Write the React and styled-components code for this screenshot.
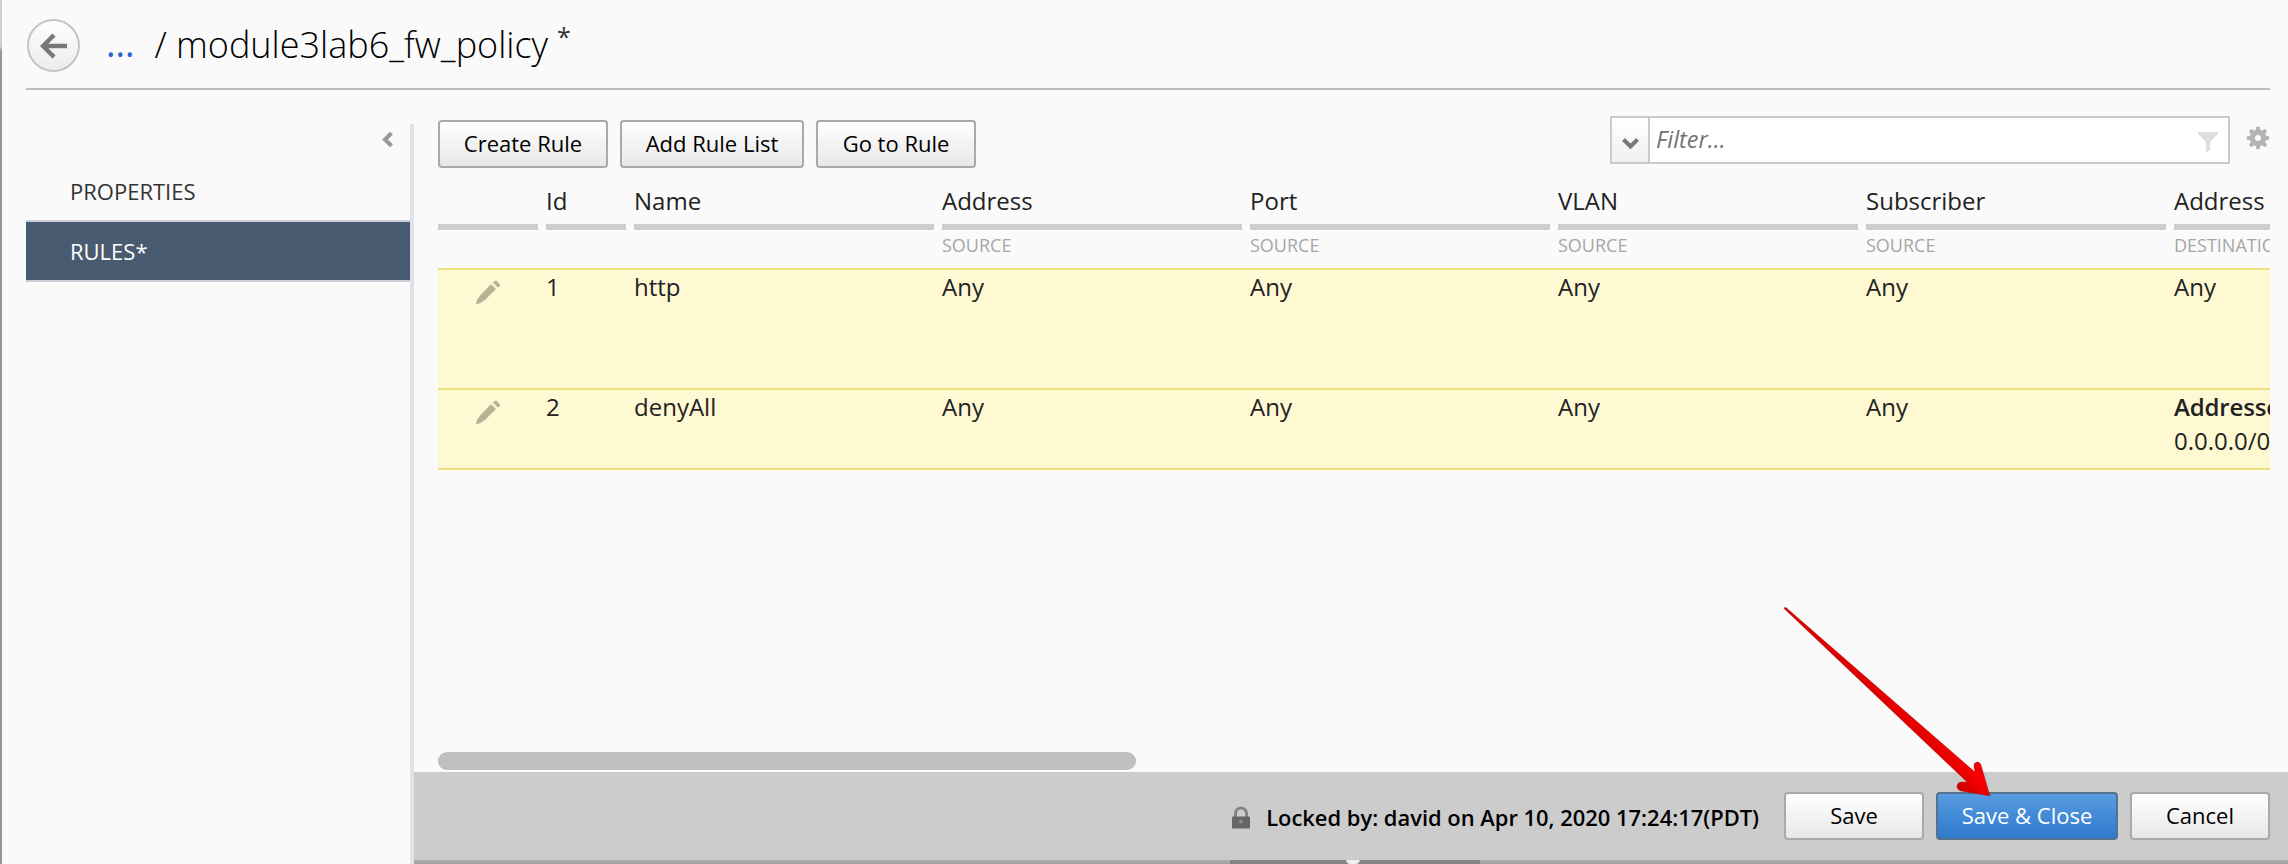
import React from "react";
import styled, { createGlobalStyle, css } from "styled-components";

const GlobalStyle = createGlobalStyle`
  * { box-sizing: border-box; }
  html, body { margin: 0; padding: 0; }
  body {
    background: #fafafa;
    font-family: "Open Sans", sans-serif;
    color: #222;
    overflow: hidden;
  }
`;

const Window = styled.div`
  position: relative;
  display: flex;
  flex-direction: column;
  width: 2288px;
  height: 864px;
  overflow: hidden;
  background: #fafafa;
`;

const WindowEdge = styled.div`
  position: absolute;
  left: 0;
  top: 0;
  width: 2px;
  height: 864px;
  background: linear-gradient(#cfcfcf 0, #cfcfcf 46px, #979797 52px, #979797 100%);
`;

const Header = styled.header`
  display: flex;
  flex: none;
  align-items: flex-start;
  height: 90px;
  margin: 0 18px 0 26px;
  border-bottom: 2px solid #bcbcbc;
`;

const BackButton = styled.button`
  display: flex;
  align-items: center;
  justify-content: center;
  flex: none;
  width: 53px;
  height: 53px;
  margin: 19px 0 0 1px;
  padding: 0;
  border: 2px solid #c4c4c4;
  border-radius: 50%;
  background: linear-gradient(#fefefe, #ececec);
`;

const Crumb = styled.a`
  margin: 18px 0 0 26px;
  font-size: 36px;
  line-height: 52px;
  color: #1f66d0;
`;

const Title = styled.h1`
  margin: 19px 0 0 20px;
  font-size: 36px;
  font-weight: 300;
  line-height: 52px;
  color: #000;
  white-space: pre;
`;

const Dirty = styled.span`
  margin: 16px 0 0 9px;
  font-size: 25px;
  line-height: 40px;
  color: #333;
`;

const Body = styled.div`
  display: flex;
  flex: 1;
  min-height: 0;
`;

const Sidebar = styled.nav`
  flex: none;
  width: 384px;
  margin-left: 26px;
  padding-top: 34px;
`;

const Collapse = styled.div`
  display: flex;
  justify-content: flex-end;
  height: 34px;
  padding: 8px 17px 0 0;
`;

const NavItem = styled.div`
  height: 62px;
  padding: 2px 0 0 44px;
  font-size: 22px;
  line-height: 58px;
  border-top: 2px solid transparent;
  border-bottom: 2px solid transparent;
  color: #333;
  ${(p) =>
    p.$active &&
    css`
      padding-top: 0;
      color: #fff;
      background: #495b70;
      border-color: #cbd0d8;
    `}
`;

const Divider = styled.div`
  flex: none;
  width: 4px;
  margin-top: 34px;
  background: #dfe3e9;
`;

const Main = styled.main`
  display: flex;
  flex-direction: column;
  flex: 1;
  min-width: 0;
`;

const Toolbar = styled.div`
  display: flex;
  flex: none;
  align-items: flex-start;
  height: 84px;
  padding: 30px 18px 0 24px;
`;

const Button = styled.button`
  flex: none;
  width: ${(p) => p.$width}px;
  height: 48px;
  margin: 0 12px 0 0;
  padding: 0 0 3px;
  border: 2px solid #a9a9a9;
  border-radius: 4px;
  background: linear-gradient(#fff, #e7e7e7);
  color: #000;
  font: 400 22px/40px "Open Sans", sans-serif;
  ${(p) =>
    p.$primary &&
    css`
      color: #fff;
      border-color: #55728f;
      background: linear-gradient(#579be2, #2f7acc);
    `}
`;

const FilterBox = styled.div`
  display: flex;
  align-items: center;
  width: 620px;
  height: 48px;
  margin: -4px 16px 0 auto;
  border: 2px solid #cacaca;
  background: #fff;
`;

const FilterToggle = styled.div`
  display: flex;
  align-items: center;
  justify-content: center;
  width: 38px;
  height: 44px;
  padding-top: 7px;
  border-right: 2px solid #cacaca;
  background: linear-gradient(#fff, #f0f0f0);
`;

const FilterText = styled.span`
  flex: 1;
  padding: 0 0 2px 6px;
  font-size: 23.5px;
  line-height: 40px;
  font-style: italic;
  color: #737373;
`;

const FunnelSlot = styled.span`
  display: flex;
  margin: 3px 10px 0 0;
`;

const GearSlot = styled.span`
  display: flex;
  margin-top: 6px;
`;

const Grid = styled.div`
  flex: none;
  margin: 0 18px 0 24px;
  overflow: hidden;
`;

const GridRow = styled.div`
  display: grid;
  grid-template-columns: 100px 80px repeat(6, 300px);
  column-gap: 8px;
  width: max-content;
`;

const ColumnHead = styled.div`
  height: 94px;
`;

const ColumnName = styled.div`
  height: 56px;
  padding-top: 8px;
  border-bottom: 6px solid #cecece;
  font-size: 24px;
  line-height: 37px;
`;

const ColumnGroup = styled.div`
  padding-top: 1px;
  font-size: 18px;
  line-height: 28px;
  color: #a6a6a6;
`;

const Record = styled(GridRow)`
  height: ${(p) => p.$height}px;
  border-top: 2px solid #eee07c;
  background: #fff9d3;
  border-bottom: ${(p) => (p.$last ? "2px solid #eee07c" : "none")};
`;

const Cell = styled.div`
  font-size: 24px;
  line-height: 34px;
`;

const EditCell = styled.div`
  display: flex;
  padding: 10px 0 0 37px;
`;

const Strong = styled.div`
  font-weight: 600;
  letter-spacing: -0.15px;
`;

const ScrollTrack = styled.div`
  height: 20px;
  margin: auto 18px 0 24px;
`;

const ScrollThumb = styled.div`
  width: 698px;
  height: 18px;
  border-radius: 9px;
  background: #bfbfbf;
`;

const Footer = styled.footer`
  display: flex;
  flex: none;
  align-items: flex-start;
  justify-content: flex-end;
  height: 88px;
  padding: 20px 6px 0 0;
  background: #ccc;
`;

const LockText = styled.span`
  margin: 3px 25px 0 16px;
  font-size: 21.92px;
  font-weight: 600;
  line-height: 46px;
  color: #000;
  white-space: nowrap;
`;

const LockSlot = styled.span`
  display: flex;
  margin-top: 14px;
`;

const BottomEdge = styled.div`
  display: flex;
  flex: none;
  height: 4px;
  padding-left: 816px;
  background: linear-gradient(#afafaf, #9f9f9f);
`;

const EdgeHandle = styled.div`
  display: flex;
  justify-content: center;
  width: 250px;
  height: 4px;
  padding-right: 4px;
  background: #848484;
`;

const Pointer = styled.svg`
  position: absolute;
  left: 1780px;
  top: 600px;
  pointer-events: none;
`;

const BackIcon = () => (
  <svg width="28" height="28" viewBox="0 0 28 28" fill="none" stroke="#777" strokeWidth="4.4">
    <path d="M27 14H4M14 3L3 14l11 11" />
  </svg>
);

const CollapseIcon = () => (
  <svg width="11" height="15" viewBox="0 0 11 15" fill="none" stroke="#999" strokeWidth="4">
    <path d="M9.5 1L3 7.5 9.5 14" />
  </svg>
);

const ChevronIcon = () => (
  <svg width="17" height="11" viewBox="0 0 17 11" fill="none" stroke="#777" strokeWidth="4">
    <path d="M1.5 1.5l7 7 7-7" />
  </svg>
);

const FunnelIcon = () => (
  <svg width="20" height="20" viewBox="0 0 20 20">
    <path d="M0 0h20v2l-8 8v8.5L8 20V10L0 2z" fill="#dedede" />
  </svg>
);

const GearIcon = () => (
  <svg width="24" height="24" viewBox="-12 -12 24 24">
    {[0, 45, 90, 135].map((angle) => (
      <rect key={angle} x="-2" y="-11.2" width="4" height="22.4" rx="1" fill="#b4b4b4" transform={`rotate(${angle})`} />
    ))}
    <circle r="8.4" fill="#b4b4b4" />
    <circle r="3" fill="#fafafa" />
  </svg>
);

const PencilIcon = () => (
  <svg width="26" height="26" viewBox="0 0 26 26" fill="#b7b296">
    <path d="M.8 24.500Q2 19 5 15.500L16 4.200l5 4.800L10 20Q6 23.500 .8 24.500z" />
    <path d="M17.800 2.600L20 .8h1.500L25 4.500V6L23 7.600z" />
  </svg>
);

const LockIcon = () => (
  <svg width="18" height="23" viewBox="0 0 18 23">
    <path d="M3.500 11V7.500a5.500 5.500 0 0 1 11 0V11" fill="none" stroke="#858585" strokeWidth="3" />
    <rect y="10.500" width="18" height="12" rx="1" fill="#666" />
    <circle cx="9" cy="15.500" r="2" fill="#8b8b8b" />
  </svg>
);

const ArrowPointer = () => (
  <Pointer width="240" height="220" viewBox="0 0 240 220">
    <defs>
      <linearGradient id="arrowFill" gradientUnits="userSpaceOnUse" x1="140" y1="120" x2="126" y2="134">
        <stop offset="0" stopColor="#f60000" />
        <stop offset="1" stopColor="#d20000" />
      </linearGradient>
    </defs>
    <path
      d="M4 8.500Q4 7 6 7.500L195 172L194 167C193 162 199 160 201 165L210 196L181 191C175 189 176 182 182 182L187 182Z"
      fill="url(#arrowFill)"
      stroke="#701010"
      strokeOpacity="0.4"
      strokeWidth="0.700"
    />
  </Pointer>
);

const columns = [
  { name: "" },
  { name: "Id" },
  { name: "Name" },
  { name: "Address", group: "SOURCE" },
  { name: "Port", group: "SOURCE" },
  { name: "VLAN", group: "SOURCE" },
  { name: "Subscriber", group: "SOURCE" },
  { name: "Address", group: "DESTINATION" },
];

const rules = [
  { id: "1", name: "http", height: 120, destination: "Any" },
  {
    id: "2",
    name: "denyAll",
    height: 82,
    destination: (
      <>
        <Strong>Addresses</Strong>0.0.0.0/0
      </>
    ),
  },
];

export default function App() {
  return (
    <Window>
      <GlobalStyle />
      <Header>
        <BackButton aria-label="Back">
          <BackIcon />
        </BackButton>
        <Crumb>...</Crumb>
        <Title>/ module3lab6_fw_policy</Title>
        <Dirty>*</Dirty>
      </Header>
      <Body>
        <Sidebar>
          <Collapse>
            <CollapseIcon />
          </Collapse>
          <NavItem>PROPERTIES</NavItem>
          <NavItem $active>RULES*</NavItem>
        </Sidebar>
        <Divider />
        <Main>
          <Toolbar>
            <Button $width={170}>Create Rule</Button>
            <Button $width={184}>Add Rule List</Button>
            <Button $width={160}>Go to Rule</Button>
            <FilterBox>
              <FilterToggle>
                <ChevronIcon />
              </FilterToggle>
              <FilterText>Filter...</FilterText>
              <FunnelSlot>
                <FunnelIcon />
              </FunnelSlot>
            </FilterBox>
            <GearSlot>
              <GearIcon />
            </GearSlot>
          </Toolbar>
          <Grid>
            <GridRow>
              {columns.map((column, index) => (
                <ColumnHead key={index}>
                  <ColumnName>{column.name}</ColumnName>
                  <ColumnGroup>{column.group}</ColumnGroup>
                </ColumnHead>
              ))}
            </GridRow>
            {rules.map((rule, index) => (
              <Record key={rule.id} $height={rule.height} $last={index === rules.length - 1}>
                <EditCell>
                  <PencilIcon />
                </EditCell>
                <Cell>{rule.id}</Cell>
                <Cell>{rule.name}</Cell>
                <Cell>Any</Cell>
                <Cell>Any</Cell>
                <Cell>Any</Cell>
                <Cell>Any</Cell>
                <Cell>{rule.destination}</Cell>
              </Record>
            ))}
          </Grid>
          <ScrollTrack>
            <ScrollThumb />
          </ScrollTrack>
          <Footer>
            <LockSlot>
              <LockIcon />
            </LockSlot>
            <LockText>Locked by: david on Apr 10, 2020 17:24:17(PDT)</LockText>
            <Button $width={140}>Save</Button>
            <Button $width={182} $primary>
              Save &amp; Close
            </Button>
            <Button $width={140}>Cancel</Button>
          </Footer>
          <BottomEdge>
            <EdgeHandle>
              <svg width="14" height="4" viewBox="0 0 14 4">
                <path d="M0 0h14q-1 4-4 4H4Q1 4 0 0z" fill="#eee" />
              </svg>
            </EdgeHandle>
          </BottomEdge>
        </Main>
      </Body>
      <ArrowPointer />
      <WindowEdge />
    </Window>
  );
}
